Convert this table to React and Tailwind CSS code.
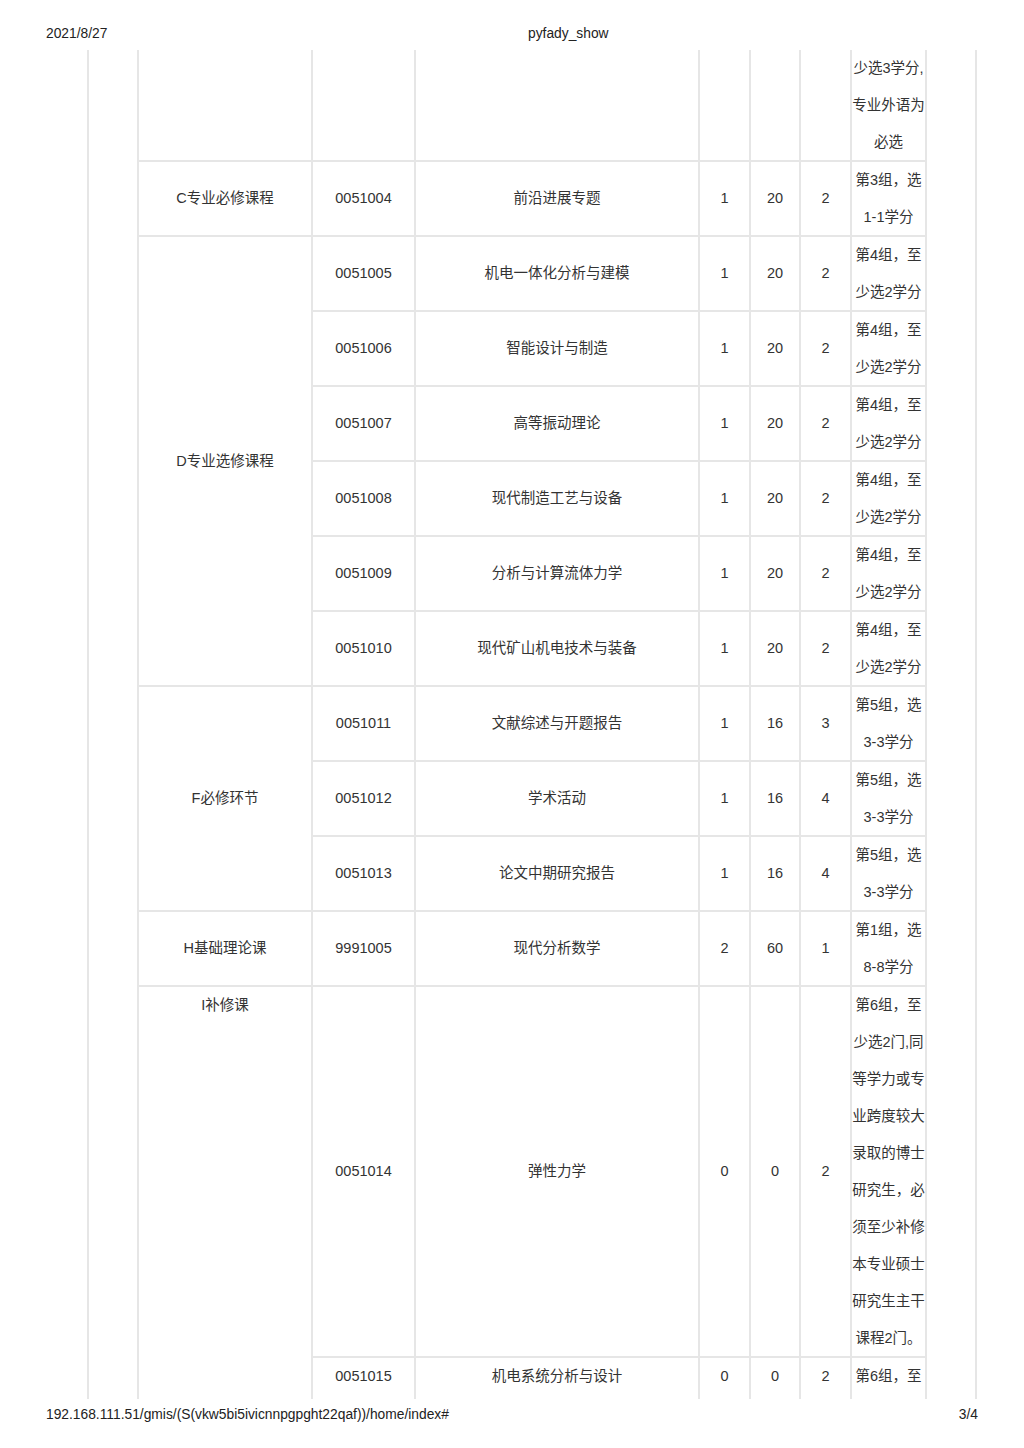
import React from "react";

const B = "border-r-2 border-b-2 border-[#e6e6e6]";

function Cell({ lines = [], first = false, top = false, className = "", style }) {
  return (
    <div
      style={style}
      className={`${B} ${first ? "border-l-2" : ""} flex flex-col items-center ${
        top ? "justify-start" : "justify-center"
      } text-center leading-[37px] whitespace-nowrap overflow-visible ${className}`}
    >
      {lines.map((l, i) => (
        <div key={i}>{l}</div>
      ))}
    </div>
  );
}

function Row({ code, name, a, b, c, notes, top = false }) {
  return (
    <>
      <Cell lines={[code]} top={top} />
      <Cell lines={[name]} top={top} />
      <Cell lines={[a]} top={top} />
      <Cell lines={[b]} top={top} />
      <Cell lines={[c]} top={top} />
      <Cell lines={notes} top={top} />
    </>
  );
}

export default function App() {
  const d = ["第4组，至", "少选2学分"];
  const f = ["第5组，选", "3-3学分"];
  return (
    <div className="w-[1024px] h-[1448px] bg-white overflow-hidden font-['Liberation_Sans','Noto_Sans_CJK_SC',sans-serif]">
      <div className="h-[50px] pt-[26px] pl-[46px] flex text-[13.8px] leading-[16px] text-[#222]">
        <span className="w-[482px]">2021/8/27</span>
        <span>pyfady_show</span>
      </div>
      <div className="h-[1349px] ml-[87px] w-[890px] border-x-2 border-[#e6e6e6] overflow-hidden">
        <div className="ml-[48px] w-[790px] grid grid-cols-[176px_103px_284px_51px_50px_51px_75px] grid-rows-[112px_repeat(11,75px)_371px_75px] text-[14.5px] text-[#333]">
          {/* partial row */}
          <Cell first />
          <Cell />
          <Cell />
          <Cell />
          <Cell />
          <Cell />
          <Cell lines={["少选3学分,", "专业外语为", "必选"]} />

          <Cell first lines={["C专业必修课程"]} />
          <Row code="0051004" name="前沿进展专题" a="1" b="20" c="2" notes={["第3组，选", "1-1学分"]} />

          <Cell first lines={["D专业选修课程"]} className="row-span-6" />
          <Row code="0051005" name="机电一体化分析与建模" a="1" b="20" c="2" notes={d} />
          <Row code="0051006" name="智能设计与制造" a="1" b="20" c="2" notes={d} />
          <Row code="0051007" name="高等振动理论" a="1" b="20" c="2" notes={d} />
          <Row code="0051008" name="现代制造工艺与设备" a="1" b="20" c="2" notes={d} />
          <Row code="0051009" name="分析与计算流体力学" a="1" b="20" c="2" notes={d} />
          <Row code="0051010" name="现代矿山机电技术与装备" a="1" b="20" c="2" notes={d} />

          <Cell first lines={["F必修环节"]} className="row-span-3" />
          <Row code="0051011" name="文献综述与开题报告" a="1" b="16" c="3" notes={f} />
          <Row code="0051012" name="学术活动" a="1" b="16" c="4" notes={f} />
          <Row code="0051013" name="论文中期研究报告" a="1" b="16" c="4" notes={f} />

          <Cell first lines={["H基础理论课"]} />
          <Row code="9991005" name="现代分析数学" a="2" b="60" c="1" notes={["第1组，选", "8-8学分"]} />

          <Cell first top lines={["I补修课"]} className="row-span-2" />
          <Row
            code="0051014"
            name="弹性力学"
            a="0"
            b="0"
            c="2"
            notes={[
              "第6组，至",
              "少选2门,同",
              "等学力或专",
              "业跨度较大",
              "录取的博士",
              "研究生，必",
              "须至少补修",
              "本专业硕士",
              "研究生主干",
              "课程2门。",
            ]}
          />
          <Row
            code="0051015"
            name="机电系统分析与设计"
            a="0"
            b="0"
            c="2"
            notes={["第6组，至"]}
            top
          />
        </div>
      </div>
      <div className="pt-[8px] px-[46px] flex justify-between text-[13.8px] leading-[16px] text-[#222]">
        <span>192.168.111.51/gmis/(S(vkw5bi5ivicnnpgpght22qaf))/home/index#</span>
        <span>3/4</span>
      </div>
    </div>
  );
}
